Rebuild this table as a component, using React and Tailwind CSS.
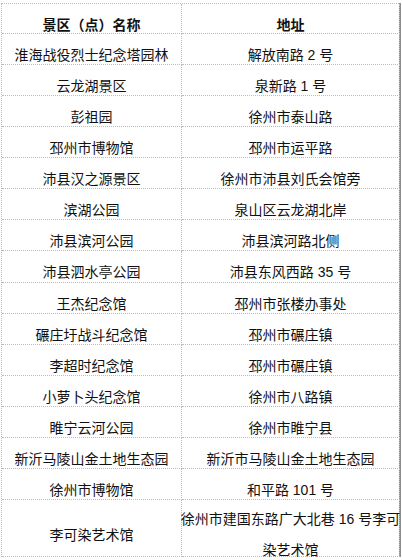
const rows = [
  ['淮海战役烈士纪念塔园林', '解放南路 2 号'],
  ['云龙湖景区', '泉新路 1 号'],
  ['彭祖园', '徐州市泰山路'],
  ['邳州市博物馆', '邳州市运平路'],
  ['沛县汉之源景区', '徐州市沛县刘氏会馆旁'],
  ['滨湖公园', '泉山区云龙湖北岸'],
  ['沛县滨河公园', '沛县滨河路北侧'],
  ['沛县泗水亭公园', '沛县东风西路 35 号'],
  ['王杰纪念馆', '邳州市张楼办事处'],
  ['碾庄圩战斗纪念馆', '邳州市碾庄镇'],
  ['李超时纪念馆', '邳州市碾庄镇'],
  ['小萝卜头纪念馆', '徐州市八路镇'],
  ['睢宁云河公园', '徐州市睢宁县'],
  ['新沂马陵山金土地生态园', '新沂市马陵山金土地生态园'],
  ['徐州市博物馆', '和平路 101 号'],
]

const font = { fontFamily: '"Liberation Sans", "Noto Sans CJK SC", sans-serif' }

export default function App() {
  return (
    <div className="min-h-screen bg-white pt-[3px] pl-[1px] text-[14px] text-[#111]" style={font}>
      <div className="w-[400px] border-r-2 border-r-[#8c8c8c]">
        <div className="grid grid-cols-[180px_218px] border-t border-l border-dotted border-[#bcbcbc]">
          <div className="h-[30px] border-b border-r border-dotted border-[#bcbcbc] pt-[13px] leading-[16px] text-center font-bold">
            景区（点）名称
          </div>
          <div className="h-[30px] border-b border-r border-dotted border-[#bcbcbc] pt-[13px] leading-[16px] text-center font-bold">
            地址
          </div>
          {rows.map(([name, addr]) => (
            <Row key={name + addr} name={name} addr={addr} />
          ))}
          <div className="h-[57px] border-b border-r border-dotted border-[#bcbcbc] pt-[27px] leading-[16px] text-center">
            李可染艺术馆
          </div>
          <div className="h-[57px] border-b border-r border-dotted border-[#bcbcbc] pt-[4px] leading-[31px] text-center whitespace-nowrap">
            <div className="-mx-[2px]">徐州市建国东路广大北巷 16 号李可</div>
            <div>染艺术馆</div>
          </div>
        </div>
      </div>
    </div>
  )
}

function Row({ name, addr }) {
  return (
    <>
      <div className="h-[31.07px] border-b border-r border-dotted border-[#bcbcbc] pt-[13px] leading-[16px] text-center whitespace-nowrap">
        {name}
      </div>
      <div className="h-[31.07px] border-b border-r border-dotted border-[#bcbcbc] pt-[13px] leading-[16px] text-center whitespace-nowrap">
        {addr}
      </div>
    </>
  )
}
